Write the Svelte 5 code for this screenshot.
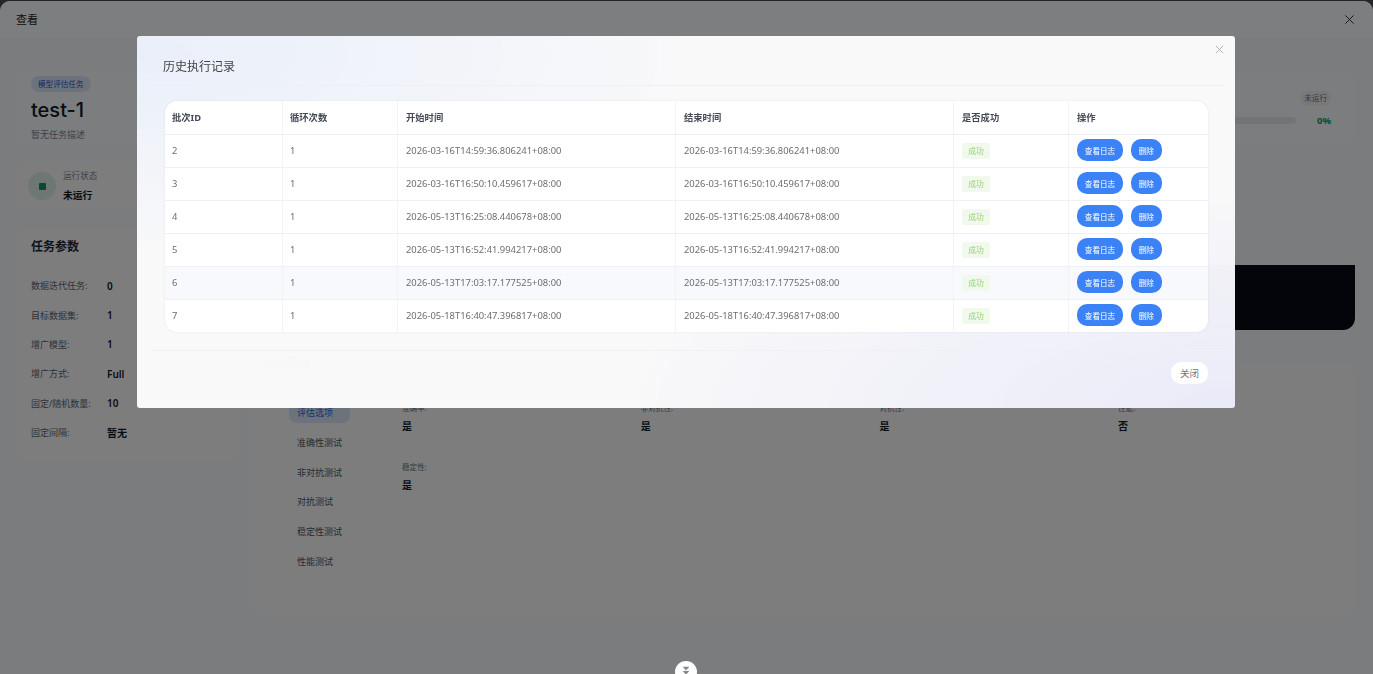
<script>
	const params = [
		['数据迭代任务:', '0'],
		['目标数据集:', '1'],
		['增广模型:', '1'],
		['增广方式:', 'Full'],
		['固定/随机数量:', '10'],
		['固定间隔:', '暂无']
	];
	const tabs = ['评估选项', '准确性测试', '非对抗测试', '对抗测试', '稳定性测试', '性能测试'];
	const options = [
		['准确率:', '是'],
		['非对抗性:', '是'],
		['对抗性:', '是'],
		['性能:', '否'],
		['稳定性:', '是']
	];
	const history = [
		{ id: 2, time: '2026-03-16T14:59:36.806241+08:00' },
		{ id: 3, time: '2026-03-16T16:50:10.459617+08:00' },
		{ id: 4, time: '2026-05-13T16:25:08.440678+08:00' },
		{ id: 5, time: '2026-05-13T16:52:41.994217+08:00' },
		{ id: 6, time: '2026-05-13T17:03:17.177525+08:00' },
		{ id: 7, time: '2026-05-18T16:40:47.396817+08:00' }
	];
</script>

<div class="page">
	<header class="page-head">
		<span>查看</span>
		<svg class="x" viewBox="0 0 12 12" width="11" height="11"><path d="M1.5 1.5l9 9M10.5 1.5l-9 9" /></svg>
	</header>

	<div class="body">
		<section class="hero">
			<div class="hero-left">
				<span class="kind">模型评估任务</span>
				<h1>test-1</h1>
				<p>暂无任务描述</p>
			</div>
			<div class="hero-right">
				<span class="state">未运行</span>
				<div class="progress">
					<div class="track"></div>
					<b>0%</b>
				</div>
			</div>
		</section>

		<div class="columns">
			<aside class="side">
				<div class="status">
					<span class="dot"><i></i></span>
					<div>
						<small>运行状态</small>
						<b>未运行</b>
					</div>
				</div>
				<div class="params">
					<h2>任务参数</h2>
					{#each params as [label, value]}
						<div class="param">
							<span>{label}</span>
							<b>{value}</b>
						</div>
					{/each}
				</div>
			</aside>

			<main class="main">
				<div class="terminal"></div>
				<h2 class="eval-title">评估配置</h2>
				<div class="eval">
					<nav class="tabs">
						{#each tabs as tab, i}
							<span class:active={i === 0}>{tab}</span>
						{/each}
					</nav>
					<div class="options">
						{#each options as [label, value]}
							<div class="option">
								<small>{label}</small>
								<b>{value}</b>
							</div>
						{/each}
					</div>
				</div>
			</main>
		</div>
	</div>

	<button class="fold" aria-label="收起">
		<svg viewBox="0 0 12 12" width="10" height="10"><path d="M2 1h8L6 5.5zM2 6h8L6 10.5z" /></svg>
	</button>
</div>

<div class="mask">
	<div class="modal">
		<div class="modal-head">
			<span>历史执行记录</span>
			<svg class="modal-x" viewBox="0 0 10 10" width="9" height="9"><path d="M1 1l8 8M9 1l-8 8" /></svg>
		</div>
		<div class="modal-body">
			<table>
				<colgroup>
					<col style="width: 118px" />
					<col style="width: 115px" />
					<col style="width: 278px" />
					<col style="width: 278px" />
					<col style="width: 115px" />
					<col />
				</colgroup>
				<thead>
					<tr>
						<th>批次ID</th>
						<th>循环次数</th>
						<th>开始时间</th>
						<th>结束时间</th>
						<th>是否成功</th>
						<th>操作</th>
					</tr>
				</thead>
				<tbody>
					{#each history as row}
						<tr class:hover={row.id === 6}>
							<td>{row.id}</td>
							<td>1</td>
							<td>{row.time}</td>
							<td>{row.time}</td>
							<td><span class="ok">成功</span></td>
							<td>
								<div class="ops">
									<button class="btn">查看日志</button>
									<button class="btn">删除</button>
								</div>
							</td>
						</tr>
					{/each}
				</tbody>
			</table>
		</div>
		<div class="modal-foot">
			<button class="close">关闭</button>
		</div>
	</div>
</div>

<style>
	:global(body) {
		margin: 0;
		background: #4a4a4a;
		overflow: hidden;
		font-family: "Noto Sans", "Noto Sans CJK SC", sans-serif;
	}

	.page {
		position: relative;
		height: 673px;
		margin-top: 1px;
		box-sizing: border-box;
		background: #f7f9fb;
		border-radius: 10px 10px 0 0;
		overflow: hidden;
		color: #1f2937;
	}

	.page-head {
		display: flex;
		justify-content: space-between;
		align-items: center;
		height: 36px;
		padding: 0 18px 0 16px;
		background: #fbfcfe;
		font-size: 11px;
		color: #222;
	}

	.x {
		stroke: #222;
		stroke-width: 1;
		fill: none;
	}

	.body {
		padding: 33px 18px 0 16px;
	}

	.hero {
		display: flex;
		justify-content: space-between;
		height: 76px;
		padding: 0 24px 0 15px;
		border-radius: 12px;
		background: #f9fbfc;
	}

	.kind {
		display: inline-block;
		padding: 0 7px;
		height: 16px;
		line-height: 16px;
		font-size: 7.6px;
		color: #2f55c4;
		background: #dbe6fb;
		border-radius: 8px;
	}

	h1 {
		margin: 5px 0 0;
		font-family: Inter, "Noto Sans", sans-serif;
		font-size: 20px;
		line-height: 26px;
		font-weight: 500;
		color: #111827;
	}

	.hero-left p {
		margin: 5px 0 0;
		font-size: 9px;
		line-height: 14px;
		color: #7a8494;
	}

	.hero-right {
		display: flex;
		flex-direction: column;
		align-items: flex-end;
		padding-top: 21px;
	}

	.state {
		padding: 0 4px;
		height: 15px;
		line-height: 15px;
		font-size: 7.6px;
		color: #6b7280;
		background: #f0f1f3;
		border-radius: 8px;
	}

	.progress {
		display: flex;
		align-items: center;
		gap: 21px;
		margin-top: 8px;
	}

	.track {
		width: 180px;
		height: 7px;
		background: #e6e8ec;
		border-radius: 4px;
	}

	.progress b {
		font-size: 9.5px;
		font-weight: 700;
		color: #059669;
	}

	.columns {
		display: grid;
		grid-template-columns: 224px minmax(0, 1fr);
		gap: 10px;
		margin-top: 16px;
	}

	.status {
		display: flex;
		align-items: center;
		gap: 7px;
		height: 48px;
		padding-left: 12px;
		border-radius: 12px;
		background: #fafbfc;
	}

	.dot {
		display: flex;
		align-items: center;
		justify-content: center;
		width: 28px;
		height: 28px;
		background: #dcefe7;
		border-radius: 50%;
	}

	.dot i {
		width: 7px;
		height: 7px;
		background: #059669;
		border-radius: 1px;
	}

	.status small {
		display: block;
		font-size: 8.6px;
		line-height: 14px;
		color: #7a8494;
	}

	.status b {
		display: block;
		margin-top: 6px;
		font-size: 9.8px;
		line-height: 14px;
		font-weight: 700;
		color: #111827;
	}

	.params {
		margin-top: 19px;
		padding: 10px 15px;
		height: 232px;
		box-sizing: border-box;
		border-radius: 12px;
		background: #fafbfc;
	}

	h2 {
		margin: 0;
		font-size: 12px;
		line-height: 16px;
		font-weight: 700;
		color: #1f2937;
	}

	.params h2 {
		margin-bottom: 16px;
	}

	.param {
		display: grid;
		grid-template-columns: 76px 1fr;
		align-items: center;
		height: 29.4px;
		font-size: 9px;
	}

	.param span {
		color: #5b6472;
	}

	.param b {
		font-size: 10px;
		font-weight: 600;
		color: #111827;
	}

	.terminal {
		margin-top: 103px;
		height: 65px;
		background: #060a14;
		border-radius: 0 0 12px 0;
	}

	.eval-title {
		margin: 25px 0 0 13px;
		color: #8a93a0;
	}

	.eval {
		display: grid;
		grid-template-columns: 100px 1fr;
		gap: 13px;
		height: 252px;
		box-sizing: border-box;
		padding: 36px 0 0 39px;
		margin-top: -8px;
		border-radius: 12px;
		background: #fafbfc;
	}

	.tabs {
		display: flex;
		flex-direction: column;
		width: 61px;
		font-size: 9px;
		color: #4b5563;
		white-space: nowrap;
	}

	.tabs span {
		height: 29.7px;
		line-height: 29.7px;
		padding-left: 8px;
	}

	.tabs .active {
		color: #2563eb;
		background: #dbe6f7;
		border-radius: 8px;
		height: 24px;
		margin-bottom: 5px;
		line-height: 28px;
	}

	.options {
		display: grid;
		grid-template-columns: repeat(4, 238.7px);
		grid-auto-rows: 59px;
		margin-top: 3px;
	}

	.option small {
		display: block;
		font-size: 7.6px;
		line-height: 12px;
		color: #6b7280;
	}

	.option b {
		display: block;
		margin-top: 6px;
		font-size: 10px;
		line-height: 13px;
		font-weight: 700;
		color: #111827;
	}

	.fold {
		position: absolute;
		z-index: 2;
		left: 675px;
		top: 660px;
		display: flex;
		align-items: center;
		justify-content: center;
		width: 22px;
		height: 22px;
		padding: 0 0 3px;
		border: 0;
		border-radius: 50%;
		background: #fff;
	}

	.fold svg {
		fill: #888;
	}

	.mask {
		position: fixed;
		inset: 0;
		background: rgba(0, 0, 0, 0.5);
		backdrop-filter: blur(0.6px);
	}

	.modal {
		position: absolute;
		left: 137px;
		top: 36px;
		width: 1098px;
		height: 372px;
		box-sizing: border-box;
		padding: 0 11px 0 15px;
		border-radius: 3px;
		background:
			radial-gradient(ellipse 560px 200px at 0% 5%, rgba(232, 238, 250, 0.9), transparent),
			radial-gradient(ellipse 620px 220px at 100% 100%, rgba(232, 233, 248, 0.9), transparent),
			rgba(253, 253, 254, 0.97);
		display: flex;
		flex-direction: column;
	}

	.modal-head {
		position: relative;
		display: flex;
		align-items: center;
		flex: 0 0 50px;
		box-sizing: border-box;
		padding: 10px 0 0 11px;
		border-bottom: 1px solid #eef0f5;
		font-size: 12px;
		color: #444;
	}

	.modal-x {
		position: absolute;
		right: 0;
		top: 9px;
		stroke: #aaa;
		stroke-width: 1;
		fill: none;
	}

	.modal-body {
		padding: 15px 16px 18px 13px;
		border-bottom: 1px solid #f0f1f6;
	}

	table {
		width: 100%;
		table-layout: fixed;
		border-collapse: separate;
		border-spacing: 0;
		border-radius: 12px;
		overflow: hidden;
		background: #fff;
		box-shadow: 0 0 2px rgba(120, 130, 160, 0.18);
		font-size: 9.4px;
	}

	th {
		height: 34px;
		padding: 0 7px 2px;
		box-sizing: border-box;
		text-align: left;
		font-size: 9.3px;
		font-weight: 700;
		color: #444a55;
		border-right: 1px solid #f1f3f6;
		border-bottom: 1px solid #eceff3;
	}

	td {
		height: 33px;
		padding: 0 7px 2px;
		box-sizing: border-box;
		color: #6e6e73;
		border-right: 1px solid #f1f3f6;
		border-bottom: 1px solid #eef0f4;
	}

	th:nth-child(n + 3),
	td:nth-child(n + 3) {
		padding-left: 8px;
	}

	th:last-child,
	td:last-child {
		border-right: 0;
	}

	tbody tr:last-child td {
		height: 32px;
		border-bottom: 0;
	}

	.hover td {
		background: #f8f9fc;
	}

	.ok {
		display: inline-block;
		width: 28px;
		height: 16px;
		line-height: 16px;
		margin-top: 2px;
		text-align: center;
		font-size: 7.8px;
		color: #95d475;
		background: #f0f9eb;
		border-radius: 3px;
	}

	.ops {
		display: flex;
		gap: 8px;
	}

	.btn {
		height: 22px;
		padding: 0 7.8px;
		border: 0;
		border-radius: 10px;
		background: #3b82f6;
		color: #fff;
		font: inherit;
		font-size: 7.6px;
	}

	.modal-foot {
		display: flex;
		justify-content: flex-end;
		padding: 11px 16px 0 0;
	}

	.close {
		width: 37px;
		height: 22px;
		padding: 0;
		border: 0;
		border-radius: 10px;
		background: #fff;
		color: #777;
		font: inherit;
		font-size: 9.5px;
	}
</style>
